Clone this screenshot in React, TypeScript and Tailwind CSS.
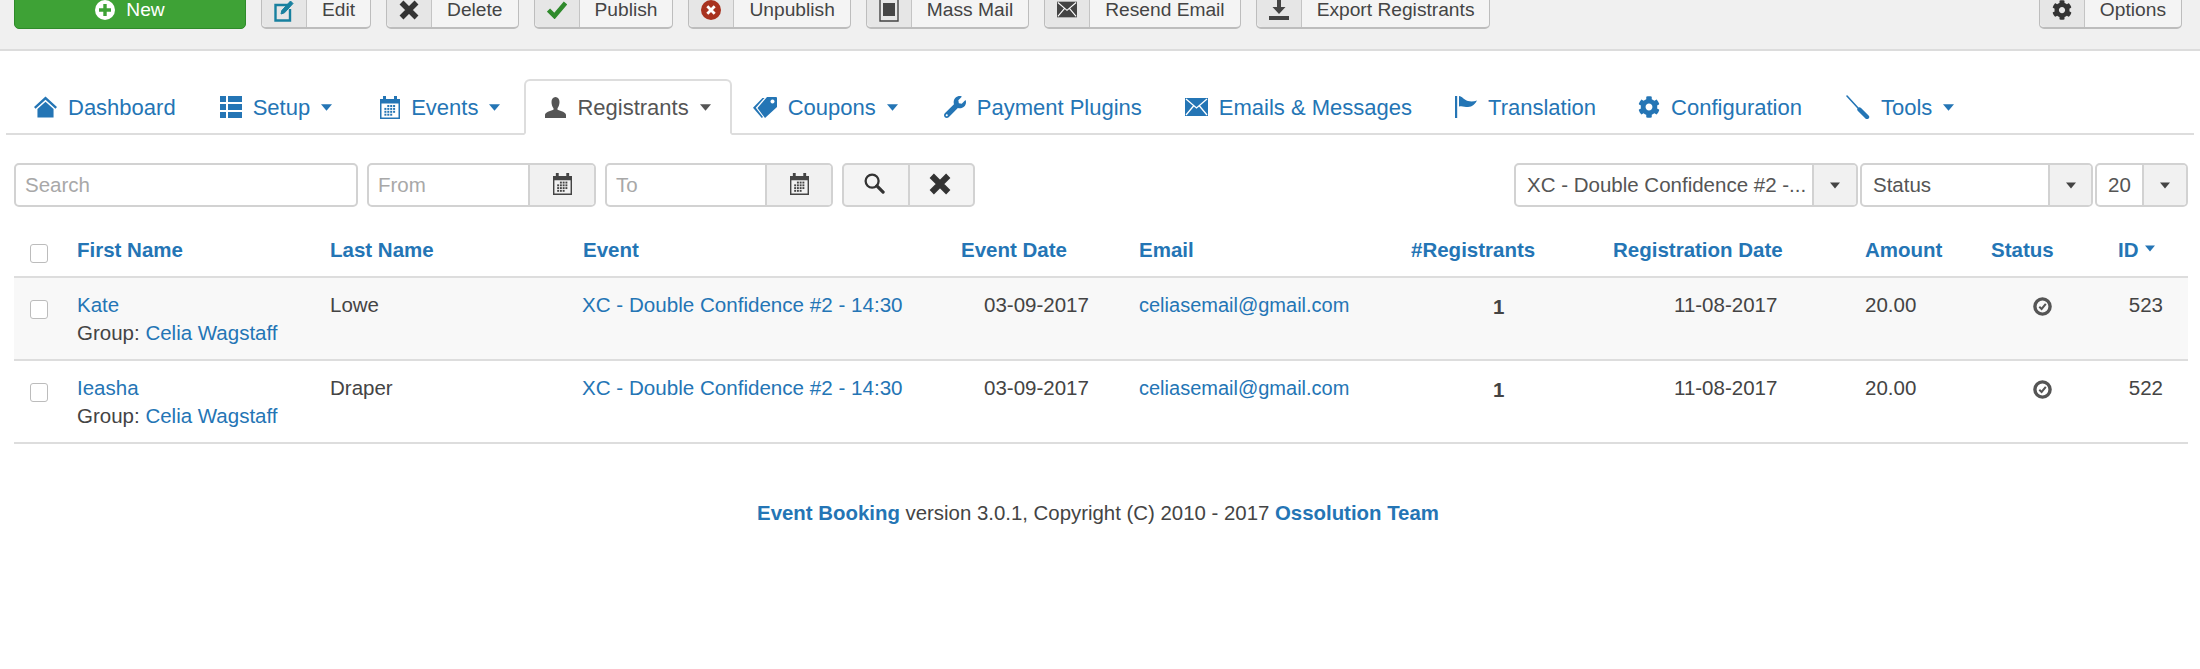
import React from 'react';
import { FaCog, FaWrench } from 'react-icons/fa';

const BLUE = 'text-[#2475b5]';

function HomeIcon() {
  return (
    <svg viewBox="0 0 24 22" className="w-[23px] h-[22px] fill-current">
      <path d="M12 0 L0 11 L1.6 12.8 L12 3.4 L22.4 12.8 L24 11 Z" />
      <path d="M12 5.6 L3.6 13 V22 H20.4 V13 Z" />
    </svg>
  );
}

function ListIcon() {
  return (
    <svg viewBox="0 0 22 22" className="w-[22px] h-[22px] fill-current">
      <path d="M0 0h6v6H0z M8 0h14v6H8z M0 8h6v6H0z M8 8h14v6H8z M0 16h6v6H0z M8 16h14v6H8z" />
    </svg>
  );
}

function CalendarIcon({ className }: { className: string }) {
  const dots = [];
  for (let r = 0; r < 4; r++) {
    for (let c = 0; c < 4; c++) {
      if ((r === 0 && c === 0) || (r === 3 && c === 3)) continue;
      dots.push(<rect key={`${r}-${c}`} x={4.4 + c * 2.9} y={9 + r * 2.9} width="2" height="2" />);
    }
  }
  return (
    <svg viewBox="0 0 20 23" className={`fill-current ${className}`}>
      <path fillRule="evenodd" d="M0 3h3V0h3v3h8V0h3v3h3v20H0z M1.5 7.5V21.5H18.5V7.5z" />
      {dots}
    </svg>
  );
}

function UserIcon() {
  return (
    <svg viewBox="0 0 21 21" className="w-[21px] h-[21px] fill-current">
      <path d="M10.5 0C8 0 6.500 2.200 6.500 5c0 2.600 .8 4.800 2 6.200v1.600C5 14 0 15.400 0 18v3h21v-3c0-2.600-5-4-8.500-5.200v-1.600c1.200-1.400 2-3.600 2-6.200 0-2.800-1.500-5-4-5z" />
    </svg>
  );
}

function TagsIcon() {
  return (
    <svg viewBox="0 0 24 22" className="w-[24px] h-[22px] fill-current">
      <path fillRule="evenodd" d="M14 1 H23 a1 1 0 0 1 1 1 V11 L12 22 L4.500 12 Z M19.500 3.500 a2 2 0 1 0 .01 0 Z" />
      <path d="M9.500 2 H11.500 L2.800 11.800 L10 21 L8.800 22 L0 11.800 Z" />
    </svg>
  );
}

function MailIcon({ className }: { className: string }) {
  return (
    <svg viewBox="0 0 23 18" className={`fill-current ${className}`}>
      <path d="M0 0h23v18H0z" />
      <path d="M1 1 L11.500 10 L22 1 M1 17 L8.500 8 M22 17 L14.500 8" fill="none" stroke="white" strokeWidth="1.300" />
    </svg>
  );
}

function FlagIcon() {
  return (
    <svg viewBox="0 0 22 22" className="w-[22px] h-[22px] fill-current">
      <path d="M0 0h2.200v22H0z M4 0 C7 0 9 4 13 5 C16 5.800 19 5.500 22 4.500 C20 8 17.500 11 13 11 C9.500 11 7 9.500 4 10.500 Z" />
    </svg>
  );
}

function DriverIcon() {
  return (
    <svg viewBox="0 0 24 24" className="w-[24px] h-[24px]" fill="none" stroke="currentColor" strokeLinecap="round">
      <path d="M1 1 L12 13" strokeWidth="1.600" />
      <path d="M13.500 14.500 L21 22" strokeWidth="4.400" />
    </svg>
  );
}

function Caret({ className = 'w-[11px]' }: { className?: string }) {
  return (
    <svg viewBox="0 0 12 7" className={`h-[7px] fill-current ${className}`}>
      <path d="M0 0h12L6 7z" />
    </svg>
  );
}

function CrossIcon({ className }: { className: string }) {
  return (
    <svg viewBox="0 0 20 20" className={className} stroke="currentColor" strokeWidth="5.500" fill="none">
      <path d="M2.500 2.500 L17.500 17.500 M17.500 2.500 L2.500 17.500" />
    </svg>
  );
}

function EditIcon() {
  return (
    <svg viewBox="0 0 20 24" className="w-[20px] h-[24px] text-[#17809f]" fill="none" stroke="currentColor">
      <path d="M14 7 H1.500 V22.500 H16 V11" strokeWidth="2.400" />
      <path d="M7 16 L7.800 12.500 L16.500 3 L19 5.500 L10.500 14.800 Z" fill="currentColor" strokeWidth="1" />
    </svg>
  );
}

function CheckIcon() {
  return (
    <svg viewBox="0 0 20 18" className="w-[20px] h-[18px] text-[#2f8a2c]" fill="none" stroke="currentColor" strokeWidth="4.500">
      <path d="M1.500 9 L7.500 15 L18.500 2" />
    </svg>
  );
}

function UnpublishIcon() {
  return (
    <svg viewBox="0 0 20 20" className="w-[20px] h-[20px]">
      <circle cx="10" cy="10" r="10" fill="#a8321f" />
      <path d="M6.300 6.300 L13.700 13.700 M13.700 6.300 L6.300 13.700" stroke="white" strokeWidth="2.800" />
    </svg>
  );
}

function MassMailIcon() {
  return (
    <svg viewBox="0 0 20 24" className="w-[20px] h-[24px] text-[#444]" fill="none" stroke="currentColor">
      <path d="M1 1 H19 V23 H1 Z" strokeWidth="1.400" />
      <path d="M4 5 H16 V18 H4 Z" fill="currentColor" stroke="none" />
    </svg>
  );
}

function ExportIcon() {
  return (
    <svg viewBox="0 0 20 22" className="w-[20px] h-[22px] fill-[#444]">
      <path d="M8 0h4v8h4.500L10 15 3.500 8H8z" />
      <path d="M0 17h20v4H0z" />
    </svg>
  );
}

function SearchIcon() {
  return (
    <svg viewBox="0 0 22 22" className="mb-[4px] mr-[3px] h-[21px] w-[21px] text-[#333]" fill="none" stroke="currentColor">
      <circle cx="8.500" cy="8.500" r="6.800" strokeWidth="2.400" />
      <path d="M13.500 13.500 L20 20" strokeWidth="3.400" strokeLinecap="round" />
    </svg>
  );
}

function PublishedIcon() {
  return (
    <svg viewBox="0 0 19 19" className="w-[19px] h-[19px] text-[#555]" fill="none" stroke="currentColor">
      <circle cx="9.500" cy="9.500" r="7.600" strokeWidth="3.400" />
      <path d="M6.300 9.800 L8.600 12 L12.800 6.800" strokeWidth="2" />
    </svg>
  );
}

function ToolbarButton({ icon, label, className = '' }: { icon: React.ReactNode; label: string; className?: string }) {
  return (
    <button className={`flex h-[38px] items-stretch rounded-[5px] border border-b-2 border-[#bdbdbd] bg-[#f4f4f4] text-[#444] ${className}`}>
      <span className="flex w-[45px] items-center justify-center rounded-l-[5px] border-r border-[#c4c4c4] bg-[#e6e6e6]">{icon}</span>
      <span className="flex items-center px-[15px] leading-[18px]">{label}</span>
    </button>
  );
}

function Toolbar() {
  return (
    <div className="flex h-[51px] items-end gap-[15px] border-b-2 border-[#dcdcdc] bg-[#f0f0f0] pb-[20px] pl-[14px] pr-[18px] text-[19.200px]">
      <button className="flex h-[38px] w-[232px] items-center justify-center gap-[11px] rounded-[5px] border border-[#2e8b2a] bg-[#3ea236] leading-[18px] text-white">
        <svg viewBox="0 0 20 20" className="h-[20px] w-[20px]">
          <circle cx="10" cy="10" r="10" fill="white" />
          <path d="M10 4v12M4 10h12" stroke="#3ea236" strokeWidth="3.400" />
        </svg>
        New
      </button>
      <ToolbarButton icon={<EditIcon />} label="Edit" />
      <ToolbarButton icon={<CrossIcon className="h-[20px] w-[20px] text-[#333]" />} label="Delete" />
      <ToolbarButton icon={<CheckIcon />} label="Publish" />
      <ToolbarButton icon={<UnpublishIcon />} label="Unpublish" />
      <ToolbarButton icon={<MassMailIcon />} label="Mass Mail" />
      <ToolbarButton icon={<MailIcon className="h-[17px] w-[20px] text-[#444]" />} label="Resend Email" />
      <ToolbarButton icon={<ExportIcon />} label="Export Registrants" />
      <ToolbarButton icon={<FaCog className="h-[20px] w-[20px] text-[#333]" />} label="Options" className="ml-auto" />
    </div>
  );
}

const tabs = [
  { label: 'Dashboard', icon: <HomeIcon />, nudge: '' },
  { label: 'Setup', icon: <ListIcon />, caret: true, nudge: '-ml-[2px]' },
  { label: 'Events', icon: <CalendarIcon className="h-[23px] w-[20px]" />, caret: true, nudge: 'ml-[2px]' },
  { label: 'Registrants', icon: <UserIcon />, caret: true, active: true, nudge: '-ml-[1px]' },
  { label: 'Coupons', icon: <TagsIcon />, caret: true, nudge: '-ml-[4px]' },
  { label: 'Payment Plugins', icon: <FaWrench className="h-[22px] w-[22px]" />, nudge: '' },
  { label: 'Emails & Messages', icon: <MailIcon className="h-[18px] w-[23px]" />, nudge: '-ml-[3px]' },
  { label: 'Translation', icon: <FlagIcon />, nudge: '-ml-[3px]' },
  { label: 'Configuration', icon: <FaCog className="h-[22px] w-[22px]" />, nudge: '-ml-[4px]' },
  { label: 'Tools', icon: <DriverIcon />, caret: true, nudge: '-ml-[2px]' },
];

function Tabs() {
  return (
    <div className="mx-[6px] mt-[28px] flex h-[56px] gap-[4px] border-b-2 border-[#dddddd] pl-[7px] text-[22px]">
      {tabs.map((tab) => (
        <div
          key={tab.label}
          className={`flex h-[56px] items-center gap-[11px] rounded-t-[6px] border-2 px-[19px] ${tab.nudge} ${
            tab.active ? 'border-[#dddddd] border-b-white bg-white text-[#555]' : `border-transparent ${BLUE}`
          }`}
        >
          {tab.icon}
          <span>{tab.label}</span>
          {tab.caret && <Caret />}
        </div>
      ))}
    </div>
  );
}

const fieldClass = 'h-[44px] rounded-[5px] border-2 border-[#d2d2d2]';

function DateField({ label, width }: { label: string; width: string }) {
  return (
    <div className={`flex items-stretch overflow-hidden bg-white ${fieldClass} ${width}`}>
      <span className="flex-1 pl-[9px] leading-[40px] text-[#a8a8a8]">{label}</span>
      <span className="flex w-[66px] items-center justify-center border-l-2 border-[#d2d2d2] bg-[#f1f1f1]">
        <CalendarIcon className="mb-[3px] h-[22px] w-[19px] text-[#444]" />
      </span>
    </div>
  );
}

function SelectField({ label, width, addon }: { label: string; width: string; addon: string }) {
  return (
    <div className={`flex items-stretch overflow-hidden bg-white ${fieldClass} ${width}`}>
      <span className="min-w-0 flex-1 pl-[11px] leading-[40px] whitespace-nowrap text-[#555]">{label}</span>
      <span className={`flex items-center justify-center border-l-2 border-[#d2d2d2] bg-[#f1f1f1] text-[#444] ${addon}`}>
        <Caret className="w-[10px]" />
      </span>
    </div>
  );
}

function Filters() {
  return (
    <div className="mt-[28px] flex justify-between pl-[14px] pr-[12px] text-[20.500px]">
      <div className="flex gap-[9px]">
        <div className={`w-[344px] bg-white pl-[9px] leading-[40px] text-[#a8a8a8] ${fieldClass}`}>Search</div>
        <DateField label="From" width="w-[229px]" />
        <DateField label="To" width="w-[228px]" />
        <div className={`flex w-[133px] overflow-hidden bg-[#f4f4f4] ${fieldClass}`}>
          <span className="flex w-[66px] items-center justify-center border-r-2 border-[#d2d2d2]">
            <SearchIcon />
          </span>
          <span className="flex flex-1 items-center justify-center">
            <CrossIcon className="mb-[2px] mr-[3px] h-[22px] w-[22px] text-[#333]" />
          </span>
        </div>
      </div>
      <div className="flex gap-[2px]">
        <SelectField label="XC - Double Confidence #2 -..." width="w-[344px]" addon="w-[44px]" />
        <SelectField label="Status" width="w-[233px]" addon="w-[43px]" />
        <SelectField label="20" width="w-[93px]" addon="w-[44px]" />
      </div>
    </div>
  );
}

const columns = [
  { width: 'w-[51px]' },
  { width: 'w-[253px]', title: 'First Name', pad: 'pl-[12px]' },
  { width: 'w-[252px]', title: 'Last Name', pad: 'pl-[12px]' },
  { width: 'w-[378px]', title: 'Event', pad: 'pl-[13px]' },
  { width: 'w-[178px]', title: 'Event Date', pad: 'pl-[13px]' },
  { width: 'w-[272px]', title: 'Email', pad: 'pl-[13px]' },
  { width: 'w-[202px]', title: '#Registrants', pad: 'pl-[13px]' },
  { width: 'w-[252px]', title: 'Registration Date', pad: 'pl-[13px]' },
  { width: 'w-[126px]', title: 'Amount', pad: 'pl-[13px]' },
  { width: 'w-[127px]', title: 'Status', pad: 'pl-[13px]' },
  { width: 'w-[83px]', title: 'ID', pad: 'pl-[13px]' },
];

const rows = [
  { first: 'Kate', last: 'Lowe', id: 523, shaded: true },
  { first: 'Ieasha', last: 'Draper', id: 522, shaded: false },
];

function Checkbox() {
  return <span className="block h-[19px] w-[18px] rounded-[3px] border border-[#bcbcbc] bg-white" />;
}

function RegistrantsTable() {
  return (
    <table className="mt-[18px] ml-[14px] w-[2174px] table-fixed border-collapse text-[20.500px] leading-[28px] text-[#444]">
      <colgroup>
        {columns.map((col, i) => (
          <col key={i} className={col.width} />
        ))}
      </colgroup>
      <thead>
        <tr className="h-[52px] border-b-2 border-[#dddddd]">
          <th className="pl-[16px] pt-[6px]">
            <Checkbox />
          </th>
          {columns.slice(1).map((col) => (
            <th key={col.title} className={`${col.pad} text-left align-top font-bold ${BLUE}`}>
              <span className="flex items-center gap-[6px] pt-[11px]">
                {col.title}
                {col.title === 'ID' && <Caret className="mb-[4px] w-[10px]" />}
              </span>
            </th>
          ))}
        </tr>
      </thead>
      <tbody>
        {rows.map((row) => (
          <tr key={row.id} className={`h-[83px] border-b-2 border-[#dddddd] ${row.shaded ? 'bg-[#f8f8f8]' : 'bg-white'}`}>
            <td className="pl-[16px] pt-[22px] align-top">
              <Checkbox />
            </td>
            <td className="pl-[12px] pt-[13px] align-top">
              <div className={BLUE}>{row.first}</div>
              <div>
                Group: <span className={BLUE}>Celia Wagstaff</span>
              </div>
            </td>
            <td className="pl-[12px] pt-[13px] align-top">{row.last}</td>
            <td className={`pl-[12px] pt-[13px] align-top whitespace-nowrap text-[20.600px] ${BLUE}`}>XC - Double Confidence #2 - 14:30</td>
            <td className="pl-[36px] pt-[13px] align-top">03-09-2017</td>
            <td className={`pl-[13px] pt-[13px] align-top text-[20px] ${BLUE}`}>celiasemail@gmail.com</td>
            <td className="pl-[95px] pt-[15px] align-top font-bold">1</td>
            <td className="pl-[74px] pt-[13px] align-top">11-08-2017</td>
            <td className="pl-[13px] pt-[13px] align-top">20.00</td>
            <td className="pl-[55px] pt-[19px] align-top">
              <PublishedIcon />
            </td>
            <td className="pt-[13px] pr-[25px] text-right align-top">{row.id}</td>
          </tr>
        ))}
      </tbody>
    </table>
  );
}

export default function App() {
  return (
    <div className="h-[669px] overflow-hidden bg-white font-['Liberation_Sans',Arial,sans-serif]">
      <Toolbar />
      <Tabs />
      <Filters />
      <RegistrantsTable />
      <p className="mt-[55px] pr-[4px] text-center text-[20.400px] leading-[28px] text-[#444]">
        <b className={BLUE}>Event Booking</b> version 3.0.1, Copyright (C) 2010 - 2017 <b className={BLUE}>Ossolution Team</b>
      </p>
    </div>
  );
}
